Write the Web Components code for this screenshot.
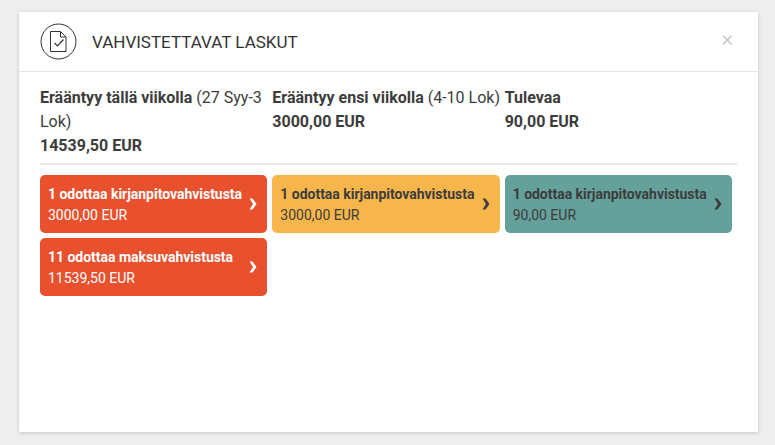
<!DOCTYPE html>
<html lang="fi">
<head>
<meta charset="utf-8">
<title>Vahvistettavat laskut</title>
<style>
  html, body { margin: 0; height: 100%; }
  body {
    background: #eeeeee;
    font-family: Roboto, "Liberation Sans", sans-serif;
    color: #3c3c3c;
    overflow: hidden;
  }
</style>
</head>
<body>
<invoice-panel heading="VAHVISTETTAVAT LASKUT">
  <due-summary slot="summary" amount="14539,50 EUR"><b>Erääntyy tällä viikolla</b> (27 Syy-3 Lok)</due-summary>
  <due-summary slot="summary" amount="3000,00 EUR"><b>Erääntyy ensi viikolla</b> (4-10 Lok)</due-summary>
  <due-summary slot="summary" amount="90,00 EUR"><b>Tulevaa</b></due-summary>

  <status-tile slot="tiles" kind="late" label="1 odottaa kirjanpitovahvistusta" amount="3000,00 EUR"></status-tile>
  <status-tile slot="tiles" kind="soon" label="1 odottaa kirjanpitovahvistusta" amount="3000,00 EUR"></status-tile>
  <status-tile slot="tiles" kind="later" label="1 odottaa kirjanpitovahvistusta" amount="90,00 EUR"></status-tile>
  <status-tile slot="tiles" kind="late" label="11 odottaa maksuvahvistusta" amount="11539,50 EUR"></status-tile>
</invoice-panel>

<script>
class InvoicePanel extends HTMLElement {
  constructor() {
    super();
    this.attachShadow({ mode: "open" });
  }

  connectedCallback() {
    const heading = this.getAttribute("heading") || "";

    this.shadowRoot.innerHTML = `
      <style>
        :host {
          display: block;
          box-sizing: border-box;
          width: 739px;
          height: 420px;
          margin: 12px 0 0 19px;
          background: #fff;
          box-shadow: 0 1px 4px rgba(0, 0, 0, 0.16);
        }
        header {
          box-sizing: border-box;
          height: 60px;
          display: flex;
          align-items: center;
          padding: 0 21px;
          border-bottom: 1px solid #e6e6e6;
        }
        svg { display: block; flex: none; }
        h1 {
          flex: 1;
          margin: 0 0 0 15px;
          font-size: 17px;
          font-weight: 400;
          color: #333;
        }
        .close {
          font-size: 22px;
          font-weight: 300;
          line-height: 22px;
          color: #c4c4c4;
          margin: -6px 4px 0 0;
        }
        .body { padding: 14px 21px 0; }
        .summary {
          display: grid;
          grid-template-columns: repeat(3, 1fr);
          padding-bottom: 5px;
          border-bottom: 2px solid #e9e9e9;
        }
        .tiles {
          display: grid;
          grid-template-columns: repeat(3, 1fr);
          row-gap: 5px;
          margin-top: 10px;
        }
      </style>
      <header>
        <svg width="37" height="37" viewBox="0 0 37 37" fill="none" stroke="#333">
          <circle cx="18.5" cy="18.500" r="17.500"/>
          <path d="M10.500 8.500h10l5.500 5.500v14.500h-15.500z"/>
          <path d="M20.500 8.500v5.500h5.500"/>
          <path d="M14.500 20l3 3 6-6.500" stroke-width="1.200"/>
        </svg>
        <h1>${heading}</h1>
        <span class="close">×</span>
      </header>
      <div class="body">
        <div class="summary"><slot name="summary"></slot></div>
        <div class="tiles"><slot name="tiles"></slot></div>
      </div>
    `;
  }
}

class DueSummary extends HTMLElement {
  constructor() {
    super();
    this.attachShadow({ mode: "open" });
  }

  connectedCallback() {
    const amount = this.getAttribute("amount") || "";

    this.shadowRoot.innerHTML = `
      <style>
        :host {
          display: block;
          font-size: 16px;
          line-height: 24px;
          color: #3c3c3c;
        }
        ::slotted(b) { font-weight: 700; }
        .amount { font-weight: 700; }
      </style>
      <div><slot></slot></div>
      <div class="amount">${amount}</div>
    `;
  }
}

class StatusTile extends HTMLElement {
  constructor() {
    super();
    this.attachShadow({ mode: "open" });
  }

  connectedCallback() {
    const label = this.getAttribute("label") || "";
    const amount = this.getAttribute("amount") || "";

    this.shadowRoot.innerHTML = `
      <style>
        :host {
          display: block;
          margin-right: 5px;
        }
        .tile {
          box-sizing: border-box;
          height: 58px;
          display: flex;
          align-items: center;
          justify-content: space-between;
          padding: 0 10px 0 8px;
          border-radius: 5px;
          font-size: 14px;
          line-height: 21px;
        }
        :host([kind="late"]) .tile { background: #e8502e; color: #fff; }
        :host([kind="soon"]) .tile { background: #f7b64c; color: #3c3c3c; }
        :host([kind="later"]) .tile { background: #65a19b; color: #3c3c3c; }
        .text { padding-top: 2px; }
        .label { font-weight: 700; white-space: nowrap; letter-spacing: -0.02px; }
        .amount { white-space: nowrap; }
        svg { display: block; flex: none; fill: currentColor; }
      </style>
      <div class="tile">
        <div class="text">
          <div class="label">${label}</div>
          <div class="amount">${amount}</div>
        </div>
        <svg width="8" height="12" viewBox="0 0 8 12"><path d="M0.500 0.500h3l4 5.500-4 5.500h-3l3.500-5.500z"/></svg>
      </div>
    `;
  }
}

customElements.define("invoice-panel", InvoicePanel);
customElements.define("due-summary", DueSummary);
customElements.define("status-tile", StatusTile);
</script>
</body>
</html>
